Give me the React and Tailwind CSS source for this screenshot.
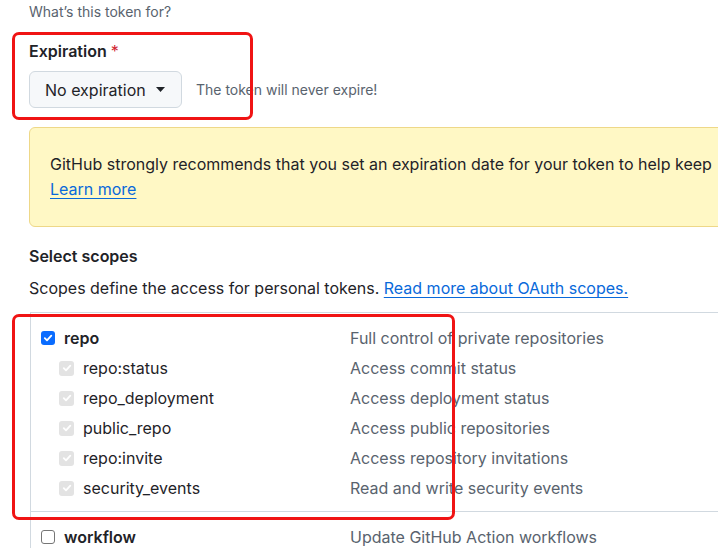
import React from 'react'

const scopes = [
  { name: 'repo:status', desc: 'Access commit status' },
  { name: 'repo_deployment', desc: 'Access deployment status' },
  { name: 'public_repo', desc: 'Access public repositories' },
  { name: 'repo:invite', desc: 'Access repository invitations' },
  { name: 'security_events', desc: 'Read and write security events' },
]

function Check({ variant }) {
  if (variant === 'checked')
    return (
      <span className="w-[14px] h-[14px] rounded-[3px] bg-[#0a6cff] flex items-center justify-center shrink-0">
        <svg width="10" height="10" viewBox="0 0 10 10">
          <path d="M1.8 5.2 L4 7.4 L8.3 2.6" fill="none" stroke="white" strokeWidth="1.8" strokeLinecap="round" strokeLinejoin="round" />
        </svg>
      </span>
    )
  if (variant === 'disabled')
    return (
      <span className="w-[15px] h-[15px] rounded-[3px] bg-[#e3e3e3] flex items-center justify-center shrink-0">
        <svg width="10" height="10" viewBox="0 0 10 10">
          <path d="M1.8 5.2 L4 7.4 L8.3 2.6" fill="none" stroke="white" strokeWidth="1.8" strokeLinecap="round" strokeLinejoin="round" />
        </svg>
      </span>
    )
  return <span className="w-[14px] h-[14px] rounded-[3px] border border-[#767676] bg-white shrink-0"></span>
}

export default function App() {
  return (
    <div className="relative w-[718px] h-[548px] overflow-hidden bg-white font-['Inter',sans-serif] text-[#1f2328]">
      <div className="pl-[29px]">
        {/* Description hint */}
        <p className="pt-[2px] text-[14px] leading-[20px] text-[#59636e]">What’s this token for?</p>

        {/* Expiration */}
        <div className="mt-[17px] text-[16px] leading-[24px] font-semibold">
          Expiration <span className="text-[#d1242f] font-normal">*</span>
        </div>
        <div className="mt-[8px] flex items-center gap-[14px]">
          <button className="h-[37px] w-[153px] flex items-center gap-[8px] pl-[15px] bg-[#f6f8fa] border border-[#d1d9e0] rounded-[6px] text-[16px] text-[#1f2328]">
            No expiration
            <svg width="9" height="5" viewBox="0 0 9 5" className="ml-[2px]">
              <path d="M0 0 L9 0 L4.5 5 Z" fill="#1f2328" />
            </svg>
          </button>
          <span className="text-[14px] text-[#59636e]">The token will never expire!</span>
        </div>

        {/* Warning */}
        <div className="mt-[19px] w-[720px] py-[24px] pl-[20px] bg-[#fff8c5] border border-[#eed888] rounded-[6px] text-[16px] leading-[25px] whitespace-nowrap">
          <p>GitHub strongly recommends that you set an expiration date for your token to help keep</p>
          <a className="text-[#0969da] underline underline-offset-[3px]">Learn more</a>
        </div>

        {/* Scopes */}
        <h3 className="mt-[17px] text-[16px] leading-[24px] font-semibold">Select scopes</h3>
        <p className="mt-[8px] text-[16px] leading-[24px] whitespace-nowrap">
          Scopes define the access for personal tokens.{' '}
          <a className="text-[#0969da] underline underline-offset-[3px]">Read more about OAuth scopes.</a>
        </p>

        <div className="mt-[12px] ml-[1px] border-t border-l border-[#d1d9e0] w-[700px]">
          <div className="pt-[10px] pb-[8px] border-b border-[#d1d9e0]">
            <div className="flex items-center h-[30px] text-[16px]">
              <div className="w-[319px] flex items-center gap-[9px] pl-[10px]">
                <Check variant="checked" />
                <span className="font-semibold">repo</span>
              </div>
              <span className="text-[#59636e]">Full control of private repositories</span>
            </div>
            {scopes.map((s) => (
              <div key={s.name} className="flex items-center h-[30px] text-[16px]">
                <div className="w-[319px] flex items-center gap-[9px] pl-[28px]">
                  <Check variant="disabled" />
                  <span>{s.name}</span>
                </div>
                <span className="text-[#59636e]">{s.desc}</span>
              </div>
            ))}
          </div>
          <div className="pt-[10px]">
            <div className="flex items-center h-[30px] text-[16px]">
              <div className="w-[319px] flex items-center gap-[9px] pl-[10px]">
                <Check />
                <span className="font-semibold">workflow</span>
              </div>
              <span className="text-[#59636e]">Update GitHub Action workflows</span>
            </div>
          </div>
        </div>
      </div>

      {/* Annotation boxes */}
      <div className="absolute left-[12px] top-[32px] w-[241px] h-[88px] border-[3px] border-[#f01414] rounded-[7px] pointer-events-none"></div>
      <div className="absolute left-[12px] top-[314px] w-[443px] h-[206px] border-[3px] border-[#f01414] rounded-[7px] pointer-events-none"></div>
    </div>
  )
}
